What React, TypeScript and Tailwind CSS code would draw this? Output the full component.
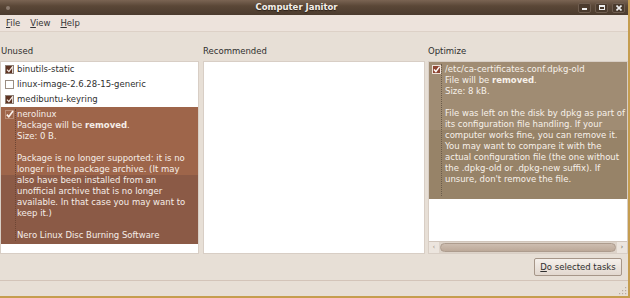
import React from "react";

const unusedDetail: React.ReactNode[] = [
  "nerolinux",
  <>
    Package will be <b>removed</b>.
  </>,
  "Size: 0 B.",
  "",
  "Package is no longer supported: it is no",
  "longer in the package archive. (It may",
  "also have been installed from an",
  "unofficial archive that is no longer",
  "available. In that case you may want to",
  "keep it.)",
  "",
  "Nero Linux Disc Burning Software",
];

const optimizeDetail: React.ReactNode[] = [
  "/etc/ca-certificates.conf.dpkg-old",
  <>
    File will be <b>removed</b>.
  </>,
  "Size: 8 kB.",
  "",
  "File was left on the disk by dpkg as part of",
  "its configuration file handling. If your",
  "computer works fine, you can remove it.",
  "You may want to compare it with the",
  "actual configuration file (the one without",
  "the .dpkg-old or .dpkg-new suffix). If",
  "unsure, don't remove the file.",
  "",
];

// small GTK-ish check box
function Check({ kind }: { kind: "on" | "off" | "sel" | "selOpt" }) {
  if (kind === "off")
    return (
      <svg width="9" height="9" viewBox="0 0 9 9">
        <rect x="0.5" y="0.5" width="8" height="8" fill="#fff" stroke="#9a8d82" />
      </svg>
    );
  if (kind === "sel")
    return (
      <svg width="9" height="9" viewBox="0 0 9 9">
        <rect x="0.5" y="0.5" width="8" height="8" fill="none" stroke="#b98d76" />
        <path d="M1.8 4.6 L3.8 6.8 L8 1" fill="none" stroke="#fbf3ee" strokeWidth="1.6" />
      </svg>
    );
  if (kind === "selOpt")
    return (
      <svg width="9" height="9" viewBox="0 0 9 9">
        <rect x="0.5" y="0.5" width="8" height="8" fill="#8e4532" stroke="#efe2da" />
        <path d="M2 4.6 L3.9 6.6 L7.6 1.6" fill="none" stroke="#fff" strokeWidth="1.5" />
      </svg>
    );
  return (
    <svg width="9" height="9" viewBox="0 0 9 9">
      <rect x="0.5" y="0.5" width="8" height="8" fill="#fff" stroke="#8e8076" />
      <rect x="1" y="1" width="6.2" height="7" fill="#5e3322" />
      <path d="M2 4.6 L3.9 6.6 L7.6 1.6" fill="none" stroke="#f4ebe6" strokeWidth="1.3" />
    </svg>
  );
}

function MenuItem({ label }: { label: string }) {
  return (
    <span className="mr-[10px]">
      <span className="underline underline-offset-1">{label[0]}</span>
      {label.slice(1)}
    </span>
  );
}

export default function App() {
  const rows = ["binutils-static", "linux-image-2.6.28-15-generic", "medibuntu-keyring"];

  return (
    <div className="w-[630px] h-[298px] overflow-hidden border-r-2 border-b-2 border-[#c59d4f] bg-[#e7dfd6] font-['DejaVu_Sans',sans-serif] text-[8.5px] leading-[11px] text-[#2f2f2f] flex flex-col">
      {/* title bar */}
      <div className="h-[15px] shrink-0 flex items-center bg-[linear-gradient(to_bottom,#7a6453,#5a4737_40%,#4b3b2e)]">
        <div className="w-[15px] flex justify-center">
          <div className="w-[4px] h-[4px] rounded-full bg-[#8d7c70]" />
        </div>
        <div className="flex-1 text-center font-bold text-[8.5px] text-[#f4efe9] [text-shadow:0_1px_1px_#2a1f17]">
          Computer Janitor
        </div>
        <div className="flex items-center gap-[4px] pr-[3px]">
          <div className="w-[13px] h-[10px] rounded-[2px] border border-[#6f5d4f] bg-[#4a3a2d] flex items-end justify-center pb-[2px]">
            <div className="w-[5px] h-[1.5px] bg-[#eee]" />
          </div>
          <div className="w-[13px] h-[10px] rounded-[2px] border border-[#6f5d4f] bg-[#4a3a2d] flex items-center justify-center">
            <div className="w-[6px] h-[5px] border border-[#eee] border-t-2" />
          </div>
          <div className="w-[13px] h-[10px] rounded-[2px] border border-[#6f5d4f] bg-[#4a3a2d] flex items-center justify-center">
            <svg width="6" height="6" viewBox="0 0 6 6">
              <path d="M0.5 0.5 L5.5 5.5 M5.5 0.5 L0.5 5.5" stroke="#eee" strokeWidth="1.6" />
            </svg>
          </div>
        </div>
      </div>

      {/* menu bar */}
      <div className="h-[17px] shrink-0 flex items-center pl-[6px] bg-[#ede3dc] border-b border-[#ddd1c7] text-[#353535]">
        <MenuItem label="File" />
        <MenuItem label="View" />
        <MenuItem label="Help" />
      </div>

      {/* panes */}
      <div className="flex pt-[14px]">
        <div className="w-[199px] flex flex-col">
          <div className="h-[11px] pl-[1px] mb-[4px]">Unused</div>
          <div className="h-[193px] bg-white border border-[#d8cec5]">
            {rows.map((r) => (
              <div key={r} className="flex h-[15px] items-center">
                <div className="w-[14px] pl-[4px] flex items-center">
                  <Check kind={r.startsWith("linux") ? "off" : "on"} />
                </div>
                <div className="pl-[2px]">{r}</div>
              </div>
            ))}
            <div className="flex pt-[2px] pb-[3px] bg-[linear-gradient(to_bottom,#9e654a_50%,#8b5a46_50%)] text-[#f6eee8]">
              <div className="w-[14px] pl-[4px] pt-[1px]">
                <Check kind="sel" />
              </div>
              <div className="pl-[1px] border-l border-dotted border-[#6e4634] whitespace-pre">
                {unusedDetail.map((l, i) => (
                  <div key={i} className="h-[11px]">
                    {l}
                  </div>
                ))}
              </div>
            </div>
          </div>
        </div>

        <div className="w-[222px] ml-[4px] flex flex-col">
          <div className="h-[11px] mb-[4px]">Recommended</div>
          <div className="h-[193px] bg-white border border-[#d8cec5]" />
        </div>

        <div className="w-[200px] ml-[3px] flex flex-col">
          <div className="h-[11px] mb-[4px]">Optimize</div>
          <div className="h-[193px] flex flex-col border border-[#d8cec5] bg-white">
            <div className="flex-1 overflow-hidden">
              <div className="flex pt-[2px] pb-[3px] bg-[linear-gradient(to_bottom,#a08c73_50%,#978368_50%)] text-[#f7f1ea]">
                <div className="w-[12px] pl-[3px] pt-[1px] shrink-0">
                  <Check kind="selOpt" />
                </div>
                <div className="pl-[3px] border-l border-dotted border-[#6b5c4b] whitespace-pre">
                  {optimizeDetail.map((l, i) => (
                    <div key={i} className="h-[11px]">
                      {l}
                    </div>
                  ))}
                </div>
              </div>
            </div>
            {/* horizontal scrollbar */}
            <div className="h-[12px] flex items-center bg-[#ddd3c9] border-t border-[#d0c5bb]">
              <div className="w-[10px] h-full flex items-center justify-center bg-[#ece5de] text-[#a0958b] text-[7px]">
                ‹
              </div>
              <div className="flex-1 h-[9px] mx-[1px] rounded-full bg-[linear-gradient(to_bottom,#cdbdb0,#bca999)] border border-[#ad9c8e]" />
              <div className="w-[10px] h-full flex items-center justify-center bg-[#ece5de] text-[#6c635b] text-[7px]">
                ›
              </div>
            </div>
          </div>
        </div>
      </div>

      {/* buttons */}
      <div className="flex justify-end pr-[6px] mt-[4px]">
        <button className="h-[18px] w-[88px] rounded-[2px] border border-[#a69689] bg-[linear-gradient(to_bottom,#f5f0eb,#e2d8cf)] text-[#2f2f2f] text-[8.5px] leading-[11px]">
          <span className="underline underline-offset-1">D</span>o selected tasks
        </button>
      </div>

      {/* status bar */}
      <div className="mt-[4px] flex-1 border-t border-[#d3c4b9] flex justify-end items-end pr-[1px] pb-[1px]">
        <svg width="9" height="9" viewBox="0 0 9 9">
          {[
            [7, 1],
            [7, 4],
            [4, 4],
            [7, 7],
            [4, 7],
            [1, 7],
          ].map(([x, y], i) => (
            <rect key={i} x={x} y={y} width="1.2" height="1.2" fill="#b8aa9e" />
          ))}
        </svg>
      </div>
    </div>
  );
}
